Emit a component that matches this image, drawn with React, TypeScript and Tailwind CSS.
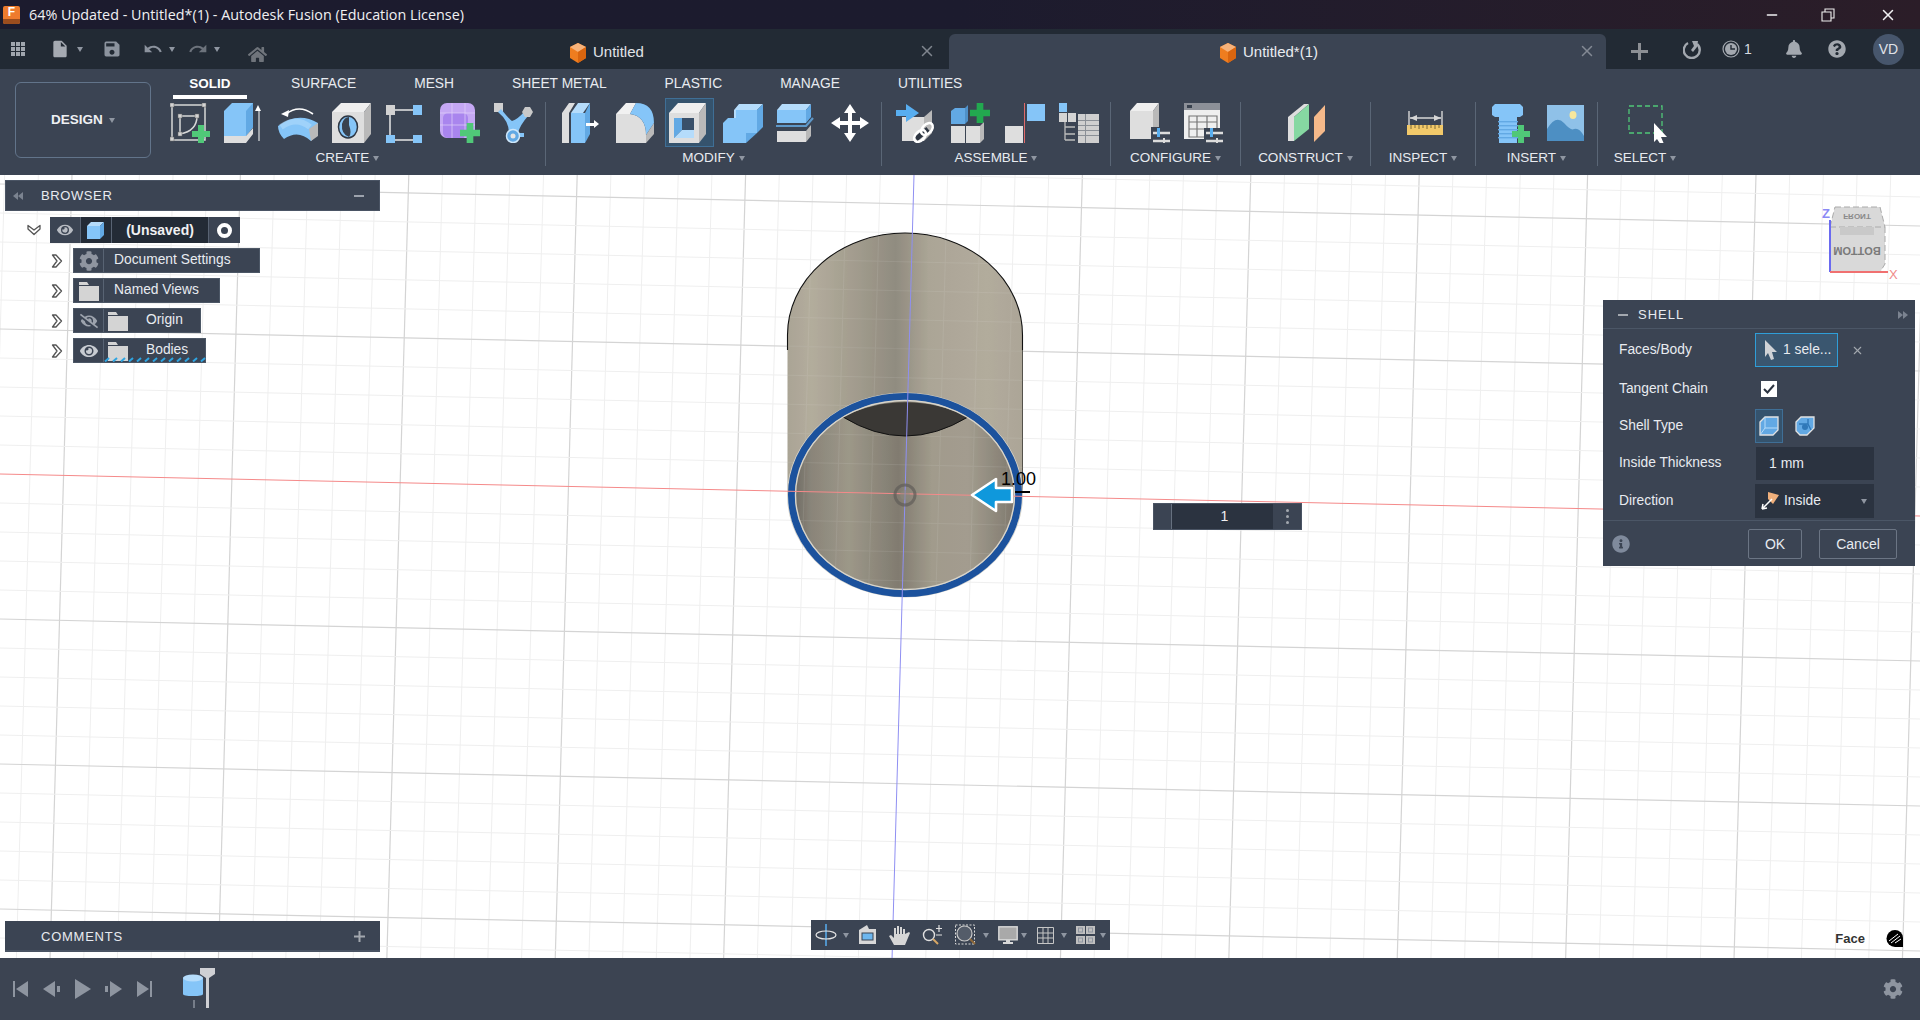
import { FaBell, FaCog, FaEye, FaEyeSlash, FaHome, FaInfoCircle, FaQuestionCircle } from "react-icons/fa";
import { MdInsertDriveFile, MdRedo, MdSave, MdUndo } from "react-icons/md";
import { FiMinus, FiX } from "react-icons/fi";

const BLUE = "#85c5f8";
const BLUE_D = "#62a9e4";
const BLUE_L = "#b5dcfb";
const GRAY = "#dedede";
const GRAY_D = "#b9b9b9";
const GREEN = "#50c878";

function Caret() {
  return <span className="inline-block h-0 w-0 border-x-[3.5px] border-t-[5px] border-x-transparent border-t-[#8f96a1]" />;
}

function I({ children, w = 40, h = 40 }: { children: React.ReactNode; w?: number; h?: number }) {
  return (
    <svg width={w} height={h} viewBox={`0 0 ${w} ${h}`} className="block">
      {children}
    </svg>
  );
}

function Plus({ x, y, s = 18, c = GREEN }: { x: number; y: number; s?: number; c?: string }) {
  const t = s / 3;
  return <path d={`M${x + t} ${y}h${t}v${t}h${t}v${t}h-${t}v${t}h-${t}v-${t}h-${t}v-${t}h${t}z`} fill={c} />;
}

const Sketch = () => (
  <I>
    <path d="M2 2H35V37H2Z M10 13H27 M10 13V31 M27 13Q27 28 10 31" fill="none" stroke="#d8d8d8" strokeWidth="1.5" />
    {[[0, 0], [32, 0], [0, 34], [8, 11], [25, 11], [8, 29]].map(([x, y], i) => (
      <rect key={i} x={x} y={y} width="4" height="4" fill="#d4d4d4" stroke="#666" strokeWidth=".5" />
    ))}
    <Plus x={22} y={22} />
  </I>
);

const Extrude = () => (
  <I>
    <path d="M0 8L8 0H29V24L22 33H0Z" fill={BLUE} />
    <path d="M22 8L29 0V24L22 33Z" fill={BLUE_D} />
    <path d="M0 33H22L29 25V31L22 40H0Z" fill={GRAY} />
    <path d="M33 2L36 8H34.5V38H33.5V8H30Z" fill="#fff" transform="translate(1 0)" />
  </I>
);

const Revolve = () => (
  <I>
    <path d="M8 11Q21 1 35 11" fill="none" stroke="#fff" strokeWidth="1.6" />
    <path d="M3 11L11 7L10 14Z" fill="#fff" />
    <path d="M0 23Q20 8 40 20V31L33 38Q20 26 6 36Q0 30 0 23Z" fill={BLUE} />
    <path d="M33 38L31 26L40 20V33Z" fill={GRAY_D} />
    <path d="M3 24Q18 13 32 24" fill="none" stroke={BLUE_L} strokeWidth="6" opacity=".55" />
  </I>
);

const Hole = () => (
  <I>
    <path d="M0 9L9 0H39L32 9Z" fill="#efefef" />
    <path d="M32 9L39 0V31L32 40Z" fill={GRAY_D} />
    <rect y="9" width="32" height="31" fill={GRAY} />
    <ellipse cx="16" cy="24" rx="9.500" ry="11" fill={BLUE} stroke="#2e3642" strokeWidth="1.5" />
    <path d="M10 21Q12 14 17 14V22Q20 30 17 34Q9 31 10 21Z" fill="#39424f" />
  </I>
);

const Pattern = () => (
  <I>
    <path d="M9 7H27 M4 12V32 M9 37H27" stroke="#e8e8e8" strokeWidth="1.5" />
    <rect x="0" y="2" width="9" height="10" fill="#d2d2d2" />
    <rect x="27" y="2" width="9" height="10" fill={BLUE} />
    <rect x="0" y="32" width="9" height="8" fill={BLUE} />
    <rect x="27" y="32" width="9" height="8" fill={BLUE} />
  </I>
);

const Form = () => (
  <I>
    <rect x="0" y="0" width="35" height="35" rx="7" fill="#c5a8f4" />
    <rect x="3" y="10" width="25" height="25" rx="5" fill="#a985ee" />
    <path d="M0 10H35 M12 0V35 M25 0V35 M0 22H35" fill="none" stroke="#e1d2fa" strokeWidth="1" opacity=".7" />
    <Plus x={20} y={20} s={20} />
  </I>
);

const Derive = () => (
  <I>
    <rect x="0" y="0" width="9" height="9" fill="#d0d0d0" />
    <path d="M7 6Q15 16 18 18Q24 16 30 9L34 13Q26 22 24 30H30V34H13V30H15Q15 18 4 9Z" fill={BLUE} />
    <path d="M31 4L36 4L39 9L36 14L31 14L28 9Z" fill="#c9c9c9" />
    <circle cx="19" cy="33" r="6.500" fill={BLUE_D} stroke="#cfe8fb" strokeWidth="1.5" />
    <circle cx="19" cy="33" r="2.500" fill="#e6e6e6" />
  </I>
);

const PressPull = () => (
  <I>
    <path d="M0 10L7 0H13L7 10V40H0Z" fill={GRAY} />
    <path d="M9 10L16 0H28L21 10Z" fill={BLUE_L} />
    <rect x="9" y="10" width="14" height="30" fill={BLUE} />
    <path d="M23 10L28 0V31L23 40Z" fill={BLUE_D} />
    <path d="M24 20H32V17L37 21L32 25V23H24Z" fill="#fff" />
  </I>
);

const Fillet = () => (
  <I>
    <path d="M0 11L10 0H20L14 11Z" fill="#f1f1f1" />
    <path d="M0 11H14Q30 13 30 32V40H0Z" fill={GRAY} />
    <path d="M14 11L20 0Q38 0 38 20L30 32Q30 13 14 11Z" fill={BLUE} />
    <path d="M30 40V32L38 20V31Z" fill={GRAY_D} />
  </I>
);

const Shell = () => (
  <I>
    <path d="M0 10L9 0H37L30 10Z" fill="#efefef" />
    <path d="M30 10L37 0V31L30 40Z" fill={GRAY_D} />
    <rect y="10" width="30" height="30" fill={GRAY} />
    <rect x="5" y="15" width="20" height="20" fill="#39506a" />
    <path d="M5 15H13V27L5 35Z" fill={BLUE_D} />
    <path d="M5 35L13 27H25V35Z" fill={BLUE_L} />
  </I>
);

const Combine = () => (
  <I>
    <path d="M11 7L16 1H40L34 7V30H11Z" fill={BLUE_L} />
    <path d="M34 7L40 1V24L34 30Z" fill={BLUE_D} />
    <rect x="13" y="7" width="21" height="23" fill={BLUE} />
    <path d="M0 20L5 15H23L23 40H0Z" fill={BLUE} />
    <path d="M23 30H34L23 40Z" fill={BLUE_D} />
  </I>
);

const Split = () => (
  <I>
    <path d="M1 7L6 1H35L30 7Z" fill={BLUE_L} />
    <path d="M1 7H30V20H1Z" fill={BLUE} />
    <path d="M30 7L35 1V14L30 20Z" fill={BLUE_D} />
    <path d="M0 23H30L37 15" fill="none" stroke="#5e98c9" strokeWidth="2.2" />
    <path d="M1 28H30V39H1Z" fill={GRAY} />
    <path d="M30 28L35 22V33L30 39Z" fill={GRAY_D} />
  </I>
);

const Move = () => (
  <I>
    <path d="M20 1L26 10H22V18H30V14L39 20L30 26V22H22V30H26L20 39L14 30H18V22H10V26L1 20L10 14V18H18V10H14Z" fill="#fff" />
  </I>
);

const NewComp = () => (
  <I w={42}>
    <path d="M6 14H28V38H6Z" fill={GRAY} />
    <path d="M28 14L36 7V30L28 38Z" fill={GRAY_D} />
    <path d="M0 7H10V1L23 10L10 19V13H0Z" fill="#58aef0" />
    <path d="M20 36L32 26" fill="none" stroke="#2e3642" strokeWidth="5" />
    <g fill="none" stroke="#fff" strokeWidth="2.5">
      <ellipse cx="24" cy="33" rx="7" ry="4.500" transform="rotate(-45 24 33)" />
      <ellipse cx="31" cy="26" rx="7" ry="4.500" transform="rotate(-45 31 26)" />
    </g>
  </I>
);

const Joint = () => (
  <I>
    <path d="M0 8L4 5H14V21H0Z" fill={BLUE_D} />
    <path d="M14 5L17 2V18L14 21Z" fill="#4f90c8" />
    <rect x="0" y="23" width="14" height="17" fill={GRAY} />
    <rect x="15" y="23" width="14" height="17" fill={GRAY} />
    <path d="M29 23L33 19V36L29 40Z" fill={GRAY_D} />
    <Plus x={19} y={0} s={20} c="#22a84f" />
  </I>
);

const Rigid = () => (
  <I>
    <rect x="0" y="23" width="18" height="17" fill={GRAY} />
    <rect x="19" y="0" width="1" height="40" fill="#e06a6a" />
    <rect x="22" y="1" width="18" height="17" fill={BLUE} />
  </I>
);

const Table = () => (
  <I>
    <rect x="0" y="0" width="8" height="9" fill={BLUE} />
    <rect x="0" y="10" width="8" height="9" fill="#d4d4d4" />
    <rect x="9" y="10" width="8" height="9" fill="#d4d4d4" />
    <path d="M6 19V37M6 24H16M6 31H16M6 37H16" stroke="#bcbcbc" strokeWidth="1.3" fill="none" />
    <rect x="19" y="11" width="21" height="29" fill="#cfcfcf" />
    {[17, 22, 27, 32].map((y) => (
      <rect key={y} x="19" y={y} width="21" height="1" fill="#8a8f96" />
    ))}
    <rect x="26" y="11" width="1" height="29" fill="#8a8f96" />
  </I>
);

const Sliders = ({ x, y }: { x: number; y: number }) => (
  <g transform={`translate(${x} ${y})`}>
    <path d="M0 3H17 M0 11H17" stroke="#dcdcdc" strokeWidth="2.4" />
    <rect x="4" y="-2" width="3" height="9" fill="#58aef0" />
    <rect x="10" y="8" width="2" height="8" fill="#dcdcdc" />
  </g>
);

const Config1 = () => (
  <I>
    <path d="M0 8L7 0H29L23 8Z" fill="#efefef" />
    <rect y="8" width="23" height="28" fill={GRAY} />
    <path d="M23 8L29 0V26L23 36Z" fill={GRAY_D} />
    <rect x="21" y="24" width="20" height="18" fill="#3b4453" />
    <Sliders x={23} y={27} />
  </I>
);

const Config2 = () => (
  <I>
    <rect x="0" y="0" width="36" height="36" fill="#efefef" />
    <rect x="0" y="0" width="36" height="7" fill="#8c9098" />
    <rect x="3" y="2" width="5" height="3" fill="#39424f" />
    <path d="M5 13H33V34H5ZM5 19H33M5 26H33M13 13V34M23 13V34" fill="none" stroke="#777" strokeWidth="1.2" />
    <rect x="20" y="25" width="20" height="17" fill="#3b4453" />
    <Sliders x={22} y={27} />
  </I>
);

const Construct = () => (
  <I>
    <path d="M0 14L16 1H21L6 14V38H0Z" fill={GRAY} />
    <path d="M6 14L21 1V26L6 38Z" fill="#86d8a2" />
    <path d="M26 14L37 2V28L26 39Z" fill="#f5b98a" />
    <path d="M0 38V14H6V38Z" fill={GRAY} />
  </I>
);

const Inspect = () => (
  <I>
    <path d="M2 8V22 M35 8V22 M3 15H34" stroke="#d6d6d6" strokeWidth="1.4" />
    <path d="M3 15L10 12V18Z M34 15L27 12V18Z" fill="#d6d6d6" />
    <rect x="0" y="22" width="36" height="10" fill="#f2c96a" />
    <path d="M4 22v4M8 22v3M12 22v4M16 22v3M20 22v4M24 22v3M28 22v4M32 22v3" stroke="#7f6a36" strokeWidth="1" />
  </I>
);

const Bolt = () => (
  <I>
    <path d="M0 4L3 1H28L31 4V12L28 14H3L0 12Z" fill={BLUE} />
    <rect x="7" y="14" width="18" height="26" fill={BLUE} />
    {[18, 22, 26, 30, 34].map((y) => (
      <rect key={y} x="6" y={y} width="20" height="1.4" fill={BLUE_D} />
    ))}
    <Plus x={20} y={22} s={18} />
  </I>
);

const Picture = () => (
  <I>
    <rect x="1" y="2" width="37" height="36" fill="#8fc1e8" />
    <path d="M1 38V26Q10 11 18 20Q25 28 28 26Q33 24 38 33V38Z" fill="#4d8fc3" />
    <ellipse cx="27" cy="12" rx="3.500" ry="4" fill="#f7e79c" />
  </I>
);

const SelectIcon = () => (
  <I>
    <rect x="1" y="3" width="33" height="27" fill="none" stroke="#50c878" strokeWidth="1.3" strokeDasharray="5 3" />
    <path d="M26 20L39 34H33L36 41L33 42L29 36L26 39Z" fill="#fff" />
  </I>
);

const OrangeCube = () => (
  <svg width="18" height="20" viewBox="0 0 18 20" className="block">
    <path d="M9 0L17 4V15L9 20L1 15V4Z" fill="#ef7d1f" />
    <path d="M9 0L17 4L9 9L1 4Z" fill="#f6b27a" />
    <path d="M9 9L17 4V15L9 20Z" fill="#d9650f" />
  </svg>
);

function Slot({ children, w, active }: { children: React.ReactNode; w: string; active?: boolean }) {
  return (
    <div className={`relative flex h-10 shrink-0 justify-center ${w}`}>
      {active && <div className="absolute left-[2px] top-[-5px] h-[49px] w-[49px] border border-[#3f6f96] bg-[#35536d]" />}
      <div className="relative">{children}</div>
    </div>
  );
}

function Group({ label, w, pad, last, lp, children }: { label: string; w: string; pad?: string; last?: boolean; lp?: string; children: React.ReactNode }) {
  return (
    <div className={`flex h-16 shrink-0 flex-col ${w} ${last ? "" : "border-r border-[#5a6676]"}`}>
      <div className={`mt-px flex h-[47px] justify-center ${pad ?? ""}`}>{children}</div>
      <div className={`flex h-4 items-center justify-center gap-[4px] text-[13.5px] text-[#e8ebf0] ${lp ?? ""}`}>
        {label}
        <Caret />
      </div>
    </div>
  );
}

function Toolbar() {
  const tabs = ["SURFACE", "MESH", "SHEET METAL", "PLASTIC", "MANAGE", "UTILITIES"];
  return (
    <div className="flex h-[106px] shrink-0 items-start bg-[#3b4453]">
      <button className="ml-[15px] mr-[13px] mt-[13px] flex h-[76px] w-[136px] items-center justify-center gap-[6px] rounded-[6px] border border-[#62748a] text-[13.5px] font-bold text-[#eef0f3]">
        DESIGN <Caret />
      </button>
      <div className="flex flex-col">
        <div className="flex h-[33px] pl-[9px] pt-[5px] text-[13.8px] text-[#e8ebf0]">
          <div className="h-[25px] w-[74px] border-b-4 border-white pb-1 text-center text-[13.5px] font-bold text-white">SOLID</div>
          <div className="ml-[15px] flex">
            {tabs.map((t) => (
              <div key={t} className="px-[29px]">
                {t}
              </div>
            ))}
          </div>
        </div>
        <div className="flex">
          <Group label="CREATE" w="w-[382px]" lp="pr-[14px]" pad="pr-[5px]">
            <Slot w="w-[54px]"><Sketch /></Slot>
            <Slot w="w-[54px]"><Extrude /></Slot>
            <Slot w="w-[54px]"><Revolve /></Slot>
            <Slot w="w-[54px]"><Hole /></Slot>
            <Slot w="w-[54px]"><Pattern /></Slot>
            <Slot w="w-[54px]"><Form /></Slot>
            <Slot w="w-[54px]"><Derive /></Slot>
          </Group>
          <Group label="MODIFY" w="w-[336px]" pad="pl-[5px]">
            <Slot w="w-[53.5px]"><PressPull /></Slot>
            <Slot w="w-[53.5px]"><Fillet /></Slot>
            <Slot w="w-[53.5px]" active><Shell /></Slot>
            <Slot w="w-[53.5px]"><Combine /></Slot>
            <Slot w="w-[53.5px]"><Split /></Slot>
            <Slot w="w-[53.5px]"><Move /></Slot>
          </Group>
          <Group label="ASSEMBLE" w="w-[229px]" pad="pl-[3px]">
            <Slot w="w-[54px]"><NewComp /></Slot>
            <Slot w="w-[54px]"><Joint /></Slot>
            <Slot w="w-[54px]"><Rigid /></Slot>
            <Slot w="w-[54px]"><Table /></Slot>
          </Group>
          <Group label="CONFIGURE" w="w-[130px]" pad="pl-[2px]">
            <Slot w="w-[54px]"><Config1 /></Slot>
            <Slot w="w-[54px]"><Config2 /></Slot>
          </Group>
          <Group label="CONSTRUCT" w="w-[130px]" pad="pl-[5px]">
            <Slot w="w-[54px]"><Construct /></Slot>
          </Group>
          <Group label="INSPECT" w="w-[105px]" pad="pl-[7px]">
            <Slot w="w-[54px]"><Inspect /></Slot>
          </Group>
          <Group label="INSERT" w="w-[122px]" pad="pl-[4px]">
            <Slot w="w-[54px]"><Bolt /></Slot>
            <Slot w="w-[54px]"><Picture /></Slot>
          </Group>
          <Group label="SELECT" w="w-[94px]" pad="pl-[5px]" last>
            <Slot w="w-[54px]"><SelectIcon /></Slot>
          </Group>
        </div>
      </div>
    </div>
  );
}

function TabRow() {
  return (
    <div className="flex h-10 shrink-0 bg-[#222a34] text-[#8c939e]">
      <div className="flex w-[280px] items-center">
        <div className="ml-[11px] grid h-[14px] w-[14px] grid-cols-3 gap-px">
          {Array.from({ length: 9 }).map((_, i) => (
            <span key={i} className="bg-[#a0a6ae]" />
          ))}
        </div>
        <MdInsertDriveFile className="ml-[25px] text-[20px] text-[#a5aab2]" />
        <span className="ml-[7px] flex"><Caret /></span>
        <MdSave className="ml-[19px] text-[20px]" />
        <MdUndo className="ml-[21px] text-[20px]" />
        <span className="ml-[6px] flex"><Caret /></span>
        <MdRedo className="ml-[13px] text-[20px] text-[#6d737c]" />
        <span className="ml-[6px] flex"><Caret /></span>
        <FaHome className="ml-[28px] mt-[10px] text-[19px] text-[#6f747b]" />
      </div>
      <div className="mt-[5px] flex w-[669px] items-center pl-[289px] pr-[13px] pt-[2px] text-[15px] text-[#e0e3e8]">
        <OrangeCube />
        <span className="ml-[6px]">Untitled</span>
        <FiX className="ml-auto mb-[3px] text-[18px] text-[#7f858e]" />
      </div>
      <div className="mt-[5px] flex w-[657px] items-center rounded-t-[6px] bg-[#3b4453] pl-[270px] pr-[5px] pt-[2px] text-[15px] text-[#e8ebf0]">
        <OrangeCube />
        <span className="ml-[6px]">Untitled*(1)</span>
        <FiX className="ml-auto mb-[3px] mr-[5px] text-[18px] text-[#838994]" />
      </div>
      <div className="flex flex-1 items-center">
        <div className="flex w-[66px] justify-center pt-[4px]">
          <svg width="17" height="17" viewBox="0 0 17 17"><path d="M7 0h3v7h7v3h-7v7H7v-7H0V7h7z" fill="#8c8f94" /></svg>
        </div>
        <div className="flex w-10 justify-center">
          <svg width="18" height="19" viewBox="0 0 18 19">
            <path d="M5 3A8 8 0 1 0 14 4" fill="none" stroke="#a3a8af" strokeWidth="2.4" />
            <path d="M9 1H15L14 7L10 12L8 10L11 6Z" fill="#a3a8af" />
          </svg>
        </div>
        <div className="ml-[10px] flex w-[46px] items-center gap-[4px] text-[14px] text-[#d6dae0]">
          <svg width="18" height="18" viewBox="0 0 18 18">
            <circle cx="9" cy="9" r="8" fill="none" stroke="#a3a8af" strokeWidth="1.2" />
            <circle cx="9" cy="9" r="6" fill="#a3a8af" />
            <path d="M9 5V9H13" fill="none" stroke="#232b36" strokeWidth="1.4" />
          </svg>
          1
        </div>
        <div className="ml-[4px] flex w-11 justify-center text-[18px] text-[#a3a8af]"><FaBell /></div>
        <div className="flex w-[42px] justify-center text-[18px] text-[#a3a8af]"><FaQuestionCircle /></div>
        <div className="ml-[15px] flex h-[31px] w-[31px] items-center justify-center rounded-full bg-[#47566c] text-[14px] text-[#e0e3e8]">VD</div>
      </div>
    </div>
  );
}

function TitleBar() {
  return (
    <div className="flex h-[29px] shrink-0 items-center bg-linear-to-r from-[#1c1b2e] via-[#1c1b2e] to-[#2b1d28] text-[#f0f0f2]">
      <div className="relative ml-[3px] flex h-[18px] w-[17px] flex-col items-center rounded-[2px] bg-[#ee7b2d] text-[12px] font-bold leading-[13px] text-white">
        F
        <span className="absolute bottom-0 h-[5px] w-full rounded-b-[2px] bg-[#9b4d1e]" />
      </div>
      <span className="ml-[9px] font-['Open_Sans',sans-serif] text-[14.35px]">64% Updated - Untitled*(1) - Autodesk Fusion (Education License)</span>
      <div className="ml-auto flex items-center">
        <FiMinus className="mr-[41px] text-[16px]" />
        <svg width="14" height="14" viewBox="0 0 14 14" className="mr-[44px]">
          <path d="M1 4H10V13H1Z M4 4V1H13V10H10" fill="none" stroke="#eee" strokeWidth="1.1" />
        </svg>
        <FiX className="mr-[23px] text-[18px]" />
      </div>
    </div>
  );
}

function Chevrons({ down }: { down?: boolean }) {
  return (
    <svg width="12" height="14" viewBox="0 0 12 14" className={down ? "rotate-90" : ""}>
      <path d="M1.500 1H5L10.500 7L5 13H1.500L6 7Z" fill="#fff" stroke="#555" strokeWidth="1.3" strokeLinejoin="round" />
    </svg>
  );
}

function Folder() {
  return (
    <svg width="20" height="20" viewBox="0 0 20 20" className="block">
      <path d="M0 1H8L10 4H20V20H0Z" fill="#d4d4d4" />
      <rect y="4" width="20" height="1" fill="#3b4453" />
    </svg>
  );
}

function Browser() {
  const cell = "flex h-full w-[30px] items-center justify-center border-r border-[#586373]";
  const row = "flex h-[25px] items-center border border-[#4c5766] bg-[#3b4453] text-[13.8px] text-[#e8ebf0]";
  return (
    <div className="absolute left-[5px] top-[5px] w-[375px]">
      <div className="flex h-[31px] items-center border border-[#4a5464] bg-[#3b4453] text-[13px] tracking-[.6px] text-[#e8ebf0]">
        <svg width="10" height="8" viewBox="0 0 10 8" className="ml-[7px]"><path d="M5 0V8L0 4Z M10 0V8L5 4Z" fill="#7b8390" /></svg>
        <span className="ml-[18px]">BROWSER</span>
        <span className="ml-auto mr-[15px] h-[2px] w-[10px] bg-[#9da3ad]" />
      </div>
      <div className="mt-[6px] flex items-center">
        <div className="flex w-[45px] justify-end pr-[10px]"><Chevrons down /></div>
        <div className="flex h-[26px] w-[190px] items-center bg-[#3b4453] text-[14px] font-bold text-[#f0f0f2]">
          <div className={cell + " !w-[31px]"}><FaEye className="text-[16px] text-[#b8bcc3]" /></div>
          <div className="flex h-full w-[31px] items-center justify-center border-r border-[#586373] bg-[#232b36]">
            <svg width="18" height="18" viewBox="0 0 18 18"><path d="M0 5L4 1H17L13 5Z" fill={BLUE_L} /><rect y="5" width="13" height="13" fill={BLUE} /><path d="M13 5L17 1V14L13 18Z" fill={BLUE_D} /></svg>
          </div>
          <div className="flex h-full w-[96px] items-center justify-center bg-[#232b36]">(Unsaved)</div>
          <div className="flex h-full flex-1 items-center justify-center border-l border-[#586373]">
            <span className="h-[15px] w-[15px] rounded-full border-[4.5px] border-white" />
          </div>
        </div>
      </div>
      <div className="ml-[50px] mt-[5px] flex flex-col gap-[5px]">
        <div className="flex items-center">
          <div className="w-[18px] -translate-x-[4px]"><Chevrons /></div>
          <div className={`${row} w-[187px]`}>
            <div className={cell}><FaCog className="text-[20px] text-[#8f95a0]" /></div>
            <span className="ml-[10px]">Document Settings</span>
          </div>
        </div>
        <div className="flex items-center">
          <div className="w-[18px] -translate-x-[4px]"><Chevrons /></div>
          <div className={`${row} w-[147px]`}>
            <div className={cell}><Folder /></div>
            <span className="ml-[10px]">Named Views</span>
          </div>
        </div>
        <div className="flex items-center">
          <div className="w-[18px] -translate-x-[4px]"><Chevrons /></div>
          <div className={`${row} w-[128px]`}>
            <div className={cell}><FaEyeSlash className="text-[18px] text-[#9da3ad]" /></div>
            <span className="ml-[4px]"><Folder /></span>
            <span className="ml-[18px]">Origin</span>
          </div>
        </div>
        <div className="flex items-center">
          <div className="w-[18px] -translate-x-[4px]"><Chevrons /></div>
          <div className={`${row} relative w-[133px]`}>
            <div className={cell}><FaEye className="text-[18px] text-[#c8ccd2]" /></div>
            <span className="ml-[4px]"><Folder /></span>
            <span className="ml-[18px]">Bodies</span>
            <svg width="102" height="5" viewBox="0 0 102 5" className="absolute bottom-0 left-[30px]">
              {Array.from({ length: 13 }).map((_, i) => (
                <path key={i} d={`M${i * 8 + 1} 4.500L${i * 8 + 5} 1`} stroke="#2ea5e2" strokeWidth="2" />
              ))}
            </svg>
          </div>
        </div>
      </div>
    </div>
  );
}

function Grid() {
  const lines = [];
  for (let k = -28; k <= 30; k++) {
    if (k === 0) continue;
    const x = 914 + k * 33.68;
    const major = k % 5 === 0;
    lines.push(<line key={`v${k}`} x1={x} y1={0} x2={x - 22} y2={785} stroke={major ? "#d4d4d4" : "#efefef"} strokeWidth={major ? 1.2 : 1} />);
  }
  for (let k = -12; k <= 18; k++) {
    if (k === 0) continue;
    const y = 299 + k * 29;
    const major = k % 5 === 0;
    lines.push(<line key={`h${k}`} x1={0} y1={y} x2={1920} y2={y + 42} stroke={major ? "#d4d4d4" : "#efefef"} strokeWidth={major ? 1.2 : 1} />);
  }
  return <g>{lines}</g>;
}

function Viewport() {
  return (
    <svg width="1920" height="785" viewBox="0 0 1920 785" className="absolute inset-0 block">
      <defs>
        <linearGradient id="body" x1="0" x2="1" y1="0" y2="0">
          <stop offset="0" stopColor="#aaa495" />
          <stop offset=".1" stopColor="#b3ad9d" />
          <stop offset=".25" stopColor="#a6a091" />
          <stop offset=".46" stopColor="#918c80" />
          <stop offset=".6" stopColor="#aba596" />
          <stop offset=".85" stopColor="#b2ac9d" />
          <stop offset="1" stopColor="#aca697" />
        </linearGradient>
        <linearGradient id="inner" x1="0" x2="1" y1="0" y2="0">
          <stop offset="0" stopColor="#6f6b63" />
          <stop offset=".08" stopColor="#8a857a" />
          <stop offset=".25" stopColor="#9d9889" />
          <stop offset=".47" stopColor="#817c71" />
          <stop offset=".62" stopColor="#a19b8c" />
          <stop offset=".78" stopColor="#a39d8f" />
          <stop offset=".92" stopColor="#8c867a" />
          <stop offset="1" stopColor="#7d776c" />
        </linearGradient>
        <clipPath id="cyl"><path d="M787.500 160A117.500 102 0 0 1 1022.500 160V320A117.500 102 0 0 1 787.500 320Z" /></clipPath>
        <clipPath id="inn"><ellipse cx="905" cy="320" rx="112" ry="97" /></clipPath>
      </defs>
      <rect width="1920" height="785" fill="#fff" />
      <Grid />
      <path d="M787.500 160A117.500 102 0 0 1 1022.500 160V320H787.500Z" fill="url(#body)" />
      <path d="M787.500 175V160A117.500 102 0 0 1 1022.500 160V175" fill="none" stroke="#111" strokeWidth="1.1" />
      <path d="M1022.500 175V320" fill="none" stroke="#55534c" strokeWidth="1" />
      <g opacity=".09" clipPath="url(#cyl)"><Grid /></g>
      <ellipse cx="905" cy="320" rx="112" ry="97" fill="url(#inner)" />
      <g opacity=".09" clipPath="url(#inn)"><Grid /></g>
      <path d="M843 242A125 110 0 0 1 968 242Q905 280 843 242Z" fill="#3a3835" />
      <path d="M843 242Q905 280 968 242" fill="none" stroke="#111" strokeWidth="1" />
      <ellipse cx="905" cy="320" rx="117.500" ry="102" fill="none" stroke="#d6d3ca" strokeWidth="1" />
      <ellipse cx="905" cy="320" rx="113.500" ry="98.500" fill="none" stroke="#1c529d" strokeWidth="7" />
      <ellipse cx="905" cy="320" rx="109.500" ry="94.500" fill="none" stroke="#d8d5cc" strokeWidth="1.4" />
      <line x1="0" y1="299" x2="1920" y2="341" stroke="#f58a8a" strokeWidth="1" />
      <line x1="914" y1="0" x2="892" y2="785" stroke="#8f8ff2" strokeWidth="1" />
      <circle cx="905" cy="320" r="10" fill="none" stroke="#5f5d58" strokeWidth="3" opacity=".7" />
      <circle cx="905" cy="320" r="5" fill="#8b877d" opacity=".5" />
      <text x="1001" y="310" fontSize="18" fontFamily="Liberation Sans, sans-serif" fill="#000">1.00</text>
      <path d="M1015 317H1030" stroke="#000" strokeWidth="2" />
      <path d="M972 320L996 304V313H1012V327H996V336Z" fill="#0f98dc" stroke="#fff" strokeWidth="2.6" strokeLinejoin="round" />
    </svg>
  );
}

function ViewCube() {
  return (
    <svg width="90" height="85" viewBox="0 0 90 85" className="absolute left-[1820px] top-[25px]">
      <path d="M15 7H60L65 27V64L60 72H10V27Z" fill="#d9d9d9" />
      <path d="M15 7H60L65 27M10 27L15 7M10 27H65M65 27V64L60 72" fill="none" stroke="#aaa" strokeWidth="1" strokeDasharray="6 3" />
      <rect x="20" y="27" width="34" height="8" fill="#c9c9c9" />
      <text x="0" y="0" fontSize="11" fontWeight="bold" fontFamily="Liberation Sans, sans-serif" fill="#7a7a7a" textAnchor="middle" transform="translate(37 47) rotate(180)">BOTTOM</text>
      <text x="0" y="0" fontSize="8" fontWeight="bold" fontFamily="Liberation Sans, sans-serif" fill="#8a8a8a" textAnchor="middle" transform="translate(37 14) scale(1 -1)">FRONT</text>
      <path d="M10 20V72" stroke="#6a6af0" strokeWidth="2" />
      <path d="M10 72H68" stroke="#f07070" strokeWidth="2" />
      <text x="2" y="18" fontSize="13" fontWeight="bold" fontFamily="Liberation Sans, sans-serif" fill="#8a8af5">Z</text>
      <text x="69" y="79" fontSize="13" fontFamily="Liberation Sans, sans-serif" fill="#f08a8a">X</text>
    </svg>
  );
}

function ValueInput() {
  return (
    <div className="absolute left-[1153px] top-[328px] flex h-[27px] w-[149px] border border-[#4a5464] bg-[#3b4453] text-[14px] text-[#f0f0f2]">
      <div className="w-[18px] border-r border-[#66707f]" />
      <div className="flex flex-1 items-center justify-center bg-[#2b3340] pl-[4px]">1</div>
      <div className="flex w-[28px] flex-col items-center justify-center gap-[3px]">
        <span className="h-[3px] w-[3px] rounded-full bg-[#a3a8af]" />
        <span className="h-[3px] w-[3px] rounded-full bg-[#a3a8af]" />
        <span className="h-[3px] w-[3px] rounded-full bg-[#a3a8af]" />
      </div>
    </div>
  );
}

function ShellDialog() {
  const row = "flex items-center pl-[16px]";
  const label = "w-[136px] shrink-0";
  return (
    <div className="absolute left-[1603px] top-[125px] flex h-[266px] w-[312px] flex-col bg-[#3b4453] text-[13.8px] text-[#e8ebf0]">
      <div className="flex h-[29px] shrink-0 items-center border-b border-[#4b5666] pt-[2px]">
        <span className="ml-[15px] h-[2px] w-[10px] bg-[#a3a8af]" />
        <span className="ml-[10px] text-[13px] tracking-[1px]">SHELL</span>
        <svg width="10" height="8" viewBox="0 0 10 8" className="ml-auto mr-[7px]"><path d="M0 0L5 4L0 8Z M5 0L10 4L5 8Z" fill="#7b8390" /></svg>
      </div>
      <div className={`${row} h-[42px]`}>
        <span className={label}>Faces/Body</span>
        <div className="flex h-[34px] w-[83px] items-center border border-[#2f9ed8] bg-[#3a566f] pl-[8px]">
          <svg width="13" height="20" viewBox="0 0 13 20"><path d="M1 0L13 12H8L10 19L7 20L4 13L1 17Z" fill="#cfd2d6" /></svg>
          <span className="ml-[6px] whitespace-nowrap">1 sele...</span>
        </div>
        <FiX className="ml-[13px] text-[13px] text-[#a3a8af]" />
      </div>
      <div className={`${row} h-[36px]`}>
        <span className={label}>Tangent Chain</span>
        <div className="ml-[6px] flex h-4 w-4 items-center justify-center bg-white">
          <svg width="12" height="10" viewBox="0 0 12 10"><path d="M1 5L4.500 8.500L11 1" fill="none" stroke="#2b3340" strokeWidth="2" /></svg>
        </div>
      </div>
      <div className={`${row} h-[38px]`}>
        <span className={label}>Shell Type</span>
        <div className="flex h-[34px] w-[28px] items-center justify-center border border-[#3f6f96] bg-[#35536d]">
          <svg width="20" height="20" viewBox="0 0 20 20"><path d="M1 6L6 1H19V14L14 19H1Z" fill={BLUE_D} stroke="#e2e2e2" strokeWidth="1.3" /><path d="M6 1V12L1 19M6 12H19" stroke={BLUE_L} strokeWidth="1" fill="none" /></svg>
        </div>
        <div className="ml-[12px]">
          <svg width="20" height="20" viewBox="0 0 20 20"><path d="M1 6L6 1H19V12L12 19H5L1 15Z" fill={BLUE_D} stroke="#e2e2e2" strokeWidth="1.3" /><path d="M4 8H13V3M13 8L16 14" stroke="#2f78b8" strokeWidth="1.4" fill="none" /><circle cx="10" cy="11" r="3" fill="#2f78b8" /></svg>
        </div>
      </div>
      <div className={`${row} h-[37px]`}>
        <span className={label}>Inside Thickness</span>
        <div className="ml-px flex h-[33px] w-[118px] items-center bg-[#2b3340] pl-[13px] text-[14px]">1 mm</div>
      </div>
      <div className={`${row} h-[38px]`}>
        <span className={label}>Direction</span>
        <div className="flex h-[34px] w-[119px] items-center bg-[#2b3340] pl-[5px]">
          <svg width="20" height="20" viewBox="0 0 20 20"><path d="M8 1L19 4L13 13L8 8Z" fill="#f0b07c" /><path d="M2 18L12 8M2 18L3 13M2 18L7 17" stroke="#fff" strokeWidth="1.5" fill="none" /></svg>
          <span className="ml-[4px]">Inside</span>
          <span className="ml-auto mr-[7px] flex"><Caret /></span>
        </div>
      </div>
      <div className="flex flex-1 items-center border-t border-[#4b5666] pt-px">
        <FaInfoCircle className="ml-[9px] text-[18px] text-[#7f8a9c]" />
        <button className="ml-[118px] h-[30px] w-[54px] rounded-[2px] border border-[#6b7584] text-[14px]">OK</button>
        <button className="ml-[17px] h-[30px] w-[78px] rounded-[2px] border border-[#6b7584] text-[14px]">Cancel</button>
      </div>
    </div>
  );
}

function NavBar() {
  return (
    <div className="absolute bottom-[8px] left-[811px] flex h-[30px] w-[299px] items-center bg-[#3b4453]">
      <svg width="22" height="22" viewBox="0 0 22 22" className="ml-[4px]">
        <path d="M11 0V22" stroke="#58aef0" strokeWidth="1.500" />
        <ellipse cx="11" cy="11" rx="10" ry="4" fill="none" stroke="#e6e6e6" strokeWidth="1.2" />
      </svg>
      <span className="ml-[6px] flex"><Caret /></span>
      <svg width="19" height="20" viewBox="0 0 19 20" className="ml-[9px]">
        <path d="M1 5L9 0L11 4H18V19H1Z" fill="#d8d8d8" />
        <rect x="4" y="8" width="11" height="7" fill="#6db7ef" stroke="#3b4453" />
      </svg>
      <svg width="21" height="21" viewBox="0 0 21 21" className="ml-[12px]">
        <path d="M5 20L0 11L2 10L5 13V3H7V9H8V1H10V9H11V2H13V9H14V4H16V9L20 7L21 8L16 20Z" fill="#d6d6d6" />
      </svg>
      <svg width="21" height="20" viewBox="0 0 21 20" className="ml-[12px]">
        <circle cx="7" cy="10" r="5.500" fill="none" stroke="#e0e0e0" strokeWidth="1.4" />
        <path d="M11 14L16 19" stroke="#d6a765" strokeWidth="2" />
        <path d="M17 0V7M14 3.500H20M14 10H20" stroke="#e0e0e0" strokeWidth="1.2" />
      </svg>
      <svg width="21" height="22" viewBox="0 0 21 22" className="ml-[12px]">
        <rect x="0.500" y="1" width="19" height="19" fill="none" stroke="#d8d8d8" strokeDasharray="2 1.500" />
        <circle cx="9.500" cy="9.500" r="7.500" fill="#545c69" stroke="#c8c8c8" strokeWidth="1.2" />
        <path d="M15 15L20 20" stroke="#8f6a3a" strokeWidth="2" />
      </svg>
      <span className="ml-[7px] flex"><Caret /></span>
      <svg width="20" height="19" viewBox="0 0 20 19" className="ml-[9px]">
        <rect x="0.800" y="0.800" width="18.400" height="13" fill="#a9a9a9" stroke="#d8d8d8" strokeWidth="1.4" />
        <path d="M8 14H12V16H15V18H5V16H8Z" fill="#d8d8d8" />
      </svg>
      <span className="ml-[3px] flex"><Caret /></span>
      <svg width="17" height="17" viewBox="0 0 17 17" className="ml-[10px]">
        <path d="M.5.5H16.500V16.500H.5ZM.5 6H16.500M.5 11H16.500M6 .5V16.500M11 .5V16.500" fill="none" stroke="#c6c6c6" />
      </svg>
      <span className="ml-[7px] flex"><Caret /></span>
      <svg width="19" height="18" viewBox="0 0 19 18" className="ml-[9px]">
        {[[0, 0], [10, 0], [0, 10], [10, 10]].map(([x, y]) => (
          <g key={`${x}${y}`}>
            <rect x={x} y={y} width="9" height="8" fill="#c0c0c0" />
            <rect x={x + 2.5} y={y + 2} width="4" height="4" fill="none" stroke="#8f96a1" />
          </g>
        ))}
      </svg>
      <span className="ml-[5px] flex"><Caret /></span>
    </div>
  );
}

function Comments() {
  return (
    <div className="absolute bottom-[6px] left-[5px] flex h-[31px] w-[375px] items-center border-b-2 border-[#4a5464] bg-[#3b4453] pl-[36px] pt-[2px] text-[13px] tracking-[.75px] text-[#e8ebf0]">
      COMMENTS
      <svg width="11" height="11" viewBox="0 0 11 11" className="ml-auto mr-[15px]"><path d="M4.500 0h2v4.500H11v2H6.500V11h-2V6.500H0v-2h4.500z" fill="#a3a8af" /></svg>
    </div>
  );
}

function Timeline() {
  const c = "#8e95a0";
  return (
    <div className="flex h-[62px] shrink-0 items-center bg-[#3c4452] pl-[5px]">
      <div className="flex w-[31px] justify-center"><svg width="15" height="16" viewBox="0 0 15 16"><path d="M0 0H2V16H0ZM15 0V16L3 8Z" fill={c} /></svg></div>
      <div className="flex w-[31px] justify-center"><svg width="17" height="16" viewBox="0 0 17 16"><path d="M12 0V16L0 8ZM14 5H17V11H14Z" fill={c} /></svg></div>
      <div className="flex w-[31px] justify-center"><svg width="16" height="20" viewBox="0 0 16 20"><path d="M0 0L16 10L0 20Z" fill={c} /></svg></div>
      <div className="flex w-[31px] justify-center"><svg width="17" height="16" viewBox="0 0 17 16"><path d="M5 0V16L17 8ZM0 5H3V11H0Z" fill={c} /></svg></div>
      <div className="flex w-[31px] justify-center"><svg width="15" height="16" viewBox="0 0 15 16"><path d="M13 0H15V16H13ZM0 0V16L12 8Z" fill={c} /></svg></div>
      <svg width="36" height="42" viewBox="0 0 36 42" className="ml-[21px]">
        <path d="M2 10Q2 8 12 8T22 10V26Q22 28 12 28T2 26Z" fill={BLUE} />
        <ellipse cx="12" cy="10" rx="10" ry="3.500" fill={BLUE_L} />
        <rect x="12" y="32" width="2" height="8" fill="#767d89" />
        <path d="M19 0H34V6L28 10V40H25V10L19 6Z" fill="#cfd0d4" />
      </svg>
      <FaCog className="ml-auto mr-[17px] text-[20px] text-[#8e95a0]" />
    </div>
  );
}

export default function App() {
  return (
    <div className="flex h-[1020px] w-[1920px] flex-col overflow-hidden bg-white font-['Liberation_Sans',Arial,sans-serif]">
      <TitleBar />
      <TabRow />
      <Toolbar />
      <div className="relative flex-1 overflow-hidden bg-white">
        <Viewport />
        <ViewCube />
        <Browser />
        <ValueInput />
        <ShellDialog />
        <Comments />
        <NavBar />
        <div className="absolute bottom-[9px] right-[16px] flex items-center gap-[21px] text-[13px] font-bold text-[#333]">
          Face
          <svg width="18" height="20" viewBox="0 0 18 20">
            <path d="M9 1A8.500 8.500 0 1 0 9 18H17V9A8 8 0 0 0 9 1Z" fill="#000" />
            <path d="M3 12L12 5M5 14L14 7M9 14L15 10" stroke="#fff" strokeWidth="1" />
          </svg>
        </div>
      </div>
      <Timeline />
    </div>
  );
}
